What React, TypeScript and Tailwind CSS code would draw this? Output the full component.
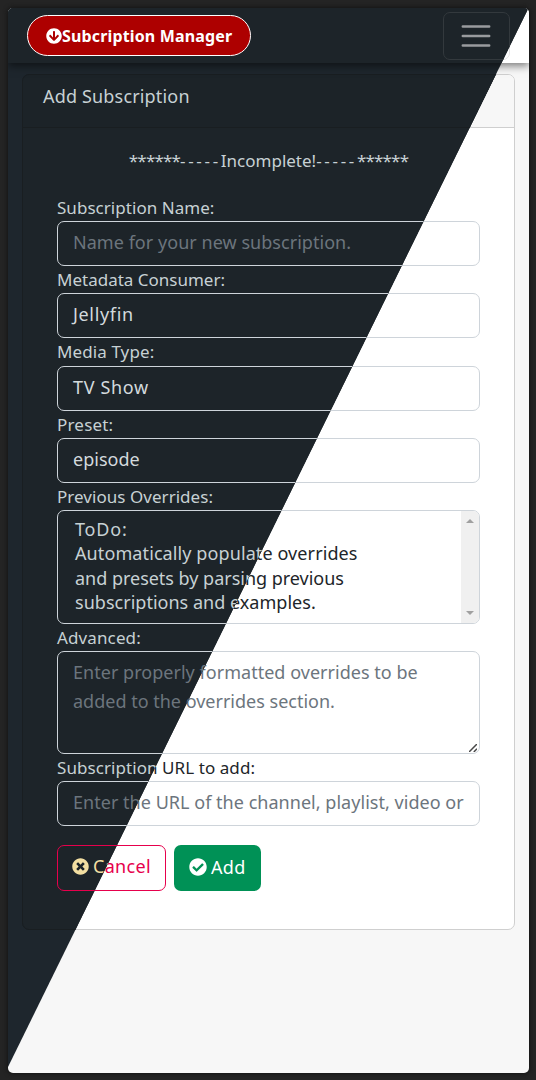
import type { ReactNode } from "react";
import { FaArrowCircleDown, FaCheckCircle, FaTimesCircle } from "react-icons/fa";
import clsx from "clsx";

type ThemeProps = { dark: boolean };

function Label({ className, children }: { className?: string; children: ReactNode }) {
  return <div className={clsx("whitespace-pre text-[17px] leading-[27px]", className)}>{children}</div>;
}

function Field({ className, children }: { className?: string; children: ReactNode }) {
  return (
    <div className="flex h-[45px] items-center rounded-[7px] border border-[#ced4da] px-[15px] pb-1">
      <div className={clsx("w-full whitespace-pre text-[18px] leading-[28px]", className)}>{children}</div>
    </div>
  );
}

function Navbar({ dark }: ThemeProps) {
  return (
    <header
      className={clsx(
        "relative flex h-[55px] shrink-0 items-start justify-between px-[19px] shadow-[0_3px_8px_rgba(0,0,0,0.5)]",
        dark ? "bg-[#1d2429]" : "bg-white",
      )}
    >
      <div className="mt-[7px] flex h-[41px] w-[224px] items-center rounded-full border border-white bg-[#ad0000] pl-[18px] text-white">
        <FaArrowCircleDown className="size-4 shrink-0" />
        <span className="text-[16px] leading-6 font-bold tracking-[0.15px] whitespace-nowrap">Subcription Manager</span>
      </div>
      <div
        className={clsx(
          "mt-1 flex h-12 w-[67px] items-center justify-center rounded-[7px] border pr-px",
          dark ? "border-[#33393d]" : "border-[#e5e5e5]",
        )}
      >
        <svg className="h-6 w-[30px]" viewBox="0 0 30 24" stroke={dark ? "#999b9e" : "#777777"} strokeWidth="2.5" strokeLinecap="round">
          <path d="M1.8 2.4h26.4M1.8 12h26.4M1.8 21.6h26.4" />
        </svg>
      </div>
    </header>
  );
}

function Screen({ dark }: ThemeProps) {
  const placeholder = "text-[#6c757d]";
  const value = dark ? "text-[#d3dadd]" : "text-[#212529]";
  const line = dark ? "border-[#191e21]" : "border-[#cfcfcf]";
  return (
    <div
      className={clsx(
        "flex h-[1065px] w-[521px] flex-col overflow-hidden rounded-[5px] font-['Noto_Sans',sans-serif]",
        dark ? "bg-[#1e262d] text-[#c7d1d4]" : "bg-[#f7f7f7] text-[#212529]",
      )}
    >
      <Navbar dark={dark} />
      <main className={clsx("mt-[11px] ml-[14px] flex h-[856px] w-[493px] flex-col rounded-[7px] border", line, dark ? "bg-[#1d2429]" : "bg-white")}>
        <div className={clsx("h-[53px] shrink-0 rounded-t-[6px] border-b pt-2 pl-5 text-[18px] leading-[27px] tracking-[0.17px]", line, dark ? "bg-[#1c2328]" : "bg-[#f7f7f7]")}>
          Add Subscription
        </div>
        <div className="flex flex-col px-[34px]">
          <div className="mt-[19px] flex justify-center text-[17px] leading-[27px]">
            <span className="tracking-[-0.85px]">******</span>
            <span className="tracking-[2.7px]">-----</span>
            <span>Incomplete!</span>
            <span className="tracking-[2.7px]">-----</span>
            <span className="tracking-[-0.85px]">******</span>
          </div>
          <Label className="mt-5 tracking-[0.04px]">Subscription Name:</Label>
          <Field className={clsx(placeholder, "tracking-[0.04px]")}>Name for your new subscription.</Field>
          <Label>Metadata Consumer:</Label>
          <Field className={clsx(value, "tracking-[0.65px]")}>Jellyfin</Field>
          <Label className="mb-px tracking-[0.1px]">Media Type:</Label>
          <Field className={clsx(value, "tracking-[0.65px]")}>TV Show</Field>
          <Label className="tracking-[0.2px]">Preset:</Label>
          <Field className={clsx(value, "tracking-[0.02px]")}>episode</Field>
          <Label className="tracking-[0.04px]">Previous Overrides:</Label>
          <div className="flex h-[114px] overflow-hidden rounded-[7px] border border-[#ced4da]">
            <div className="flex-1 pt-1.5 pl-[17px] text-[18px] leading-[24.3px] whitespace-nowrap">
              <div className="tracking-[0.85px]">ToDo:</div>
              <div className="tracking-[0.1px]">Automatically populate overrides</div>
              <div className="tracking-[-0.02px]">and presets by parsing previous</div>
              <div className="tracking-[0.02px]">subscriptions and examples.</div>
            </div>
            <div className="flex w-[18px] flex-col items-center justify-between bg-[#f0f0f0] pt-2 pb-2 text-[#a0a0a0]">
              <svg className="h-1 w-2" viewBox="0 0 8 4" fill="currentColor"><path d="M4 0 8 4H0z" /></svg>
              <svg className="h-1 w-2" viewBox="0 0 8 4" fill="currentColor"><path d="M0 0h8L4 4z" /></svg>
            </div>
          </div>
          <Label className="tracking-[0.12px]">Advanced:</Label>
          <div className="flex h-[103px] justify-between rounded-[7px] border border-[#ced4da] pt-1.5 pl-[15px] text-[18px] leading-[29px] whitespace-nowrap">
            <div className={placeholder}>
              <div className="tracking-[0.03px]">Enter properly formatted overrides to be</div>
              <div>added to the overrides section.</div>
            </div>
            <svg className="mr-0.5 mb-px size-2 self-end" viewBox="0 0 8 8" fill="none" stroke="#484848" strokeWidth="1.5">
              <path d="M0 8 8 0M4.8 8 8 4.8" />
            </svg>
          </div>
          <Label className="tracking-[0.07px]">Subscription URL to add:</Label>
          <Field className={clsx(placeholder, "tracking-[0.03px]")}>Enter the URL of the channel, playlist, video or</Field>
          <div className="mt-[19px] flex gap-2 text-[18px] leading-[28px]">
            <div className={clsx("flex h-[46px] w-[109px] items-center rounded-[7px] border border-[#e6004c] pb-1 pl-[14px]", dark ? "text-[#f3dfa2]" : "text-[#e6004c]")}>
              <FaTimesCircle className="mr-1 size-[17px]" />
              <span className="tracking-[0.3px]">Cancel</span>
            </div>
            <div className="flex h-[46px] w-[87px] items-center rounded-[7px] bg-[#009156] pb-0.5 pl-[15px] text-white">
              <FaCheckCircle className="mr-1 size-[18px]" />
              <span className="tracking-[0.3px]">Add</span>
            </div>
          </div>
        </div>
      </main>
    </div>
  );
}

export default function App() {
  return (
    <div className="h-[1080px] w-[536px] overflow-hidden bg-[#242424] p-2">
      <div className="relative h-[1065px] w-[521px] rounded-[5px] shadow-[0_0_4px_1px_#151515]">
        <Screen dark={false} />
        <div className="absolute inset-0 [clip-path:polygon(0_0,520.5px_0,0_1059px)]">
          <Screen dark />
        </div>
      </div>
    </div>
  );
}
